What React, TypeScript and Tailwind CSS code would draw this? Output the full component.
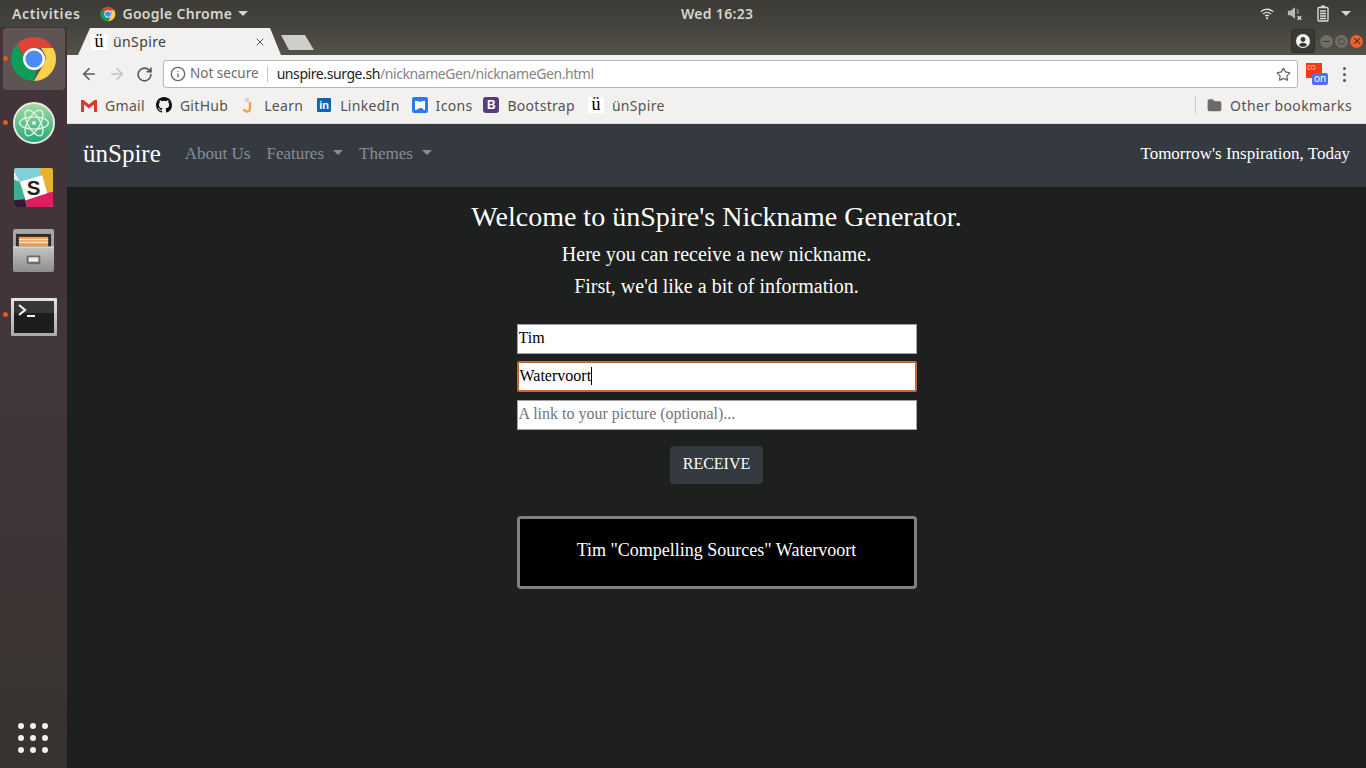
import { ArrowLeft, ArrowRight, RotateCw, Info, Star, X, Minus, Square, Folder } from 'lucide-react';

const uiFont = "font-['Noto_Sans','Open_Sans',sans-serif]";

function ChromeLogo({ size }: { size: number }) {
  return (
    <svg width={size} height={size} viewBox="0 0 48 48">
      <path d="M24 2a22 22 0 0 1 19.05 11H24a11 11 0 0 0-10.4 7.4L6.6 9.6A22 22 0 0 1 24 2z" fill="#db4437" />
      <path d="M43.05 13A22 22 0 0 1 24 46l9.5-16.5A11 11 0 0 0 33.5 16.5L31 13z" fill="#fdd14a" />
      <path d="M6.6 9.6l9.9 17.1a8.8 8.8 0 0 0 8 6.3l2.2-.1L24 46A22 22 0 0 1 6.6 9.6z" fill="#0f9d58" />
      <circle cx="24" cy="24" r="11" fill="#fff" />
      <circle cx="24" cy="24" r="8.6" fill="#4c8bf5" />
    </svg>
  );
}

function AtomLogo() {
  return (
    <svg width="42" height="42" viewBox="0 0 44 44">
      <defs>
        <linearGradient id="atomBg" x1="0" y1="0" x2="0" y2="1">
          <stop offset="0" stopColor="#a9dba6" />
          <stop offset="0.55" stopColor="#5cc08a" />
          <stop offset="1" stopColor="#25a873" />
        </linearGradient>
      </defs>
      <circle cx="22" cy="22" r="21" fill="url(#atomBg)" stroke="#e8ebe6" strokeWidth="2" />
      <g fill="none" stroke="#e4f5e6" strokeWidth="1.4">
        <ellipse cx="22" cy="22" rx="15" ry="6.5" />
        <ellipse cx="22" cy="22" rx="15" ry="6.5" transform="rotate(60 22 22)" />
        <ellipse cx="22" cy="22" rx="15" ry="6.5" transform="rotate(120 22 22)" />
      </g>
      <circle cx="22" cy="22" r="2.2" fill="#e4f5e6" />
    </svg>
  );
}

function SlackLogo() {
  return (
    <svg width="39" height="39" viewBox="0 0 40 40">
      <rect width="40" height="40" rx="3" fill="#e8e8e8" />
      <path d="M0 3a3 3 0 0 1 3-3h24l2 8L6 14z" fill="#7fd0d8" />
      <path d="M27 0h10a3 3 0 0 1 3 3v21l-7 2-6-18z" fill="#e5b32c" />
      <path d="M33 26l7-2v13a3 3 0 0 1-3 3H13l-2-7z" fill="#dc1f5d" />
      <path d="M0 12l6 2 6 19 1 7H3a3 3 0 0 1-3-3z" fill="#3eb08f" />
      <path d="M0 33l11-1 2 8H3a3 3 0 0 1-3-3z" fill="#35173c" />
      <path d="M6.5 14L29 7.5 34 26l-22 7z" fill="#fff" />
      <text x="20" y="28" textAnchor="middle" fontFamily="'Liberation Sans',sans-serif" fontWeight="700" fontSize="21" fill="#222">S</text>
    </svg>
  );
}

function FilesLogo() {
  return (
    <svg width="41" height="43" viewBox="0 0 42 44" className="mt-[-2px]">
      <defs>
        <linearGradient id="filesFront" x1="0" y1="0" x2="0" y2="1">
          <stop offset="0" stopColor="#c4c4c2" />
          <stop offset="1" stopColor="#8e8e8c" />
        </linearGradient>
      </defs>
      <rect x="0" y="0" width="42" height="20" rx="2" fill="#a7a7a5" />
      <rect x="3" y="5" width="36" height="16" fill="#2f2b28" />
      <rect x="6" y="8" width="30" height="10" fill="#ef9a4a" />
      <rect x="6" y="10" width="30" height="1.5" fill="#fbe3c3" />
      <rect x="6" y="13" width="30" height="1.5" fill="#fbe3c3" />
      <path d="M0 18h42v24a2 2 0 0 1-2 2H2a2 2 0 0 1-2-2z" fill="url(#filesFront)" />
      <rect x="0" y="18" width="42" height="1" fill="#e0e0de" />
      <rect x="14" y="27" width="14" height="9" rx="1.5" fill="#6c6c6a" />
      <rect x="16" y="29" width="10" height="4.5" fill="#eee" />
    </svg>
  );
}

function TerminalLogo() {
  return (
    <svg width="46" height="38" viewBox="0 0 46 38" className="mt-[3px]">
      <defs>
        <linearGradient id="termFrame" x1="0" y1="0" x2="0" y2="1">
          <stop offset="0" stopColor="#e4e4e1" />
          <stop offset="1" stopColor="#a9a9a6" />
        </linearGradient>
      </defs>
      <rect width="46" height="38" rx="1" fill="url(#termFrame)" />
      <rect x="3" y="3" width="40" height="32" fill="#1d1d1d" />
      <rect x="3" y="3" width="40" height="12" fill="#363636" />
      <path d="M8 7l6 5-6 5" fill="none" stroke="#eeeeee" strokeWidth="2.2" />
      <rect x="16" y="17" width="8" height="2" fill="#eeeeee" />
    </svg>
  );
}

function Dock() {
  return (
    <div className="w-[67px] shrink-0 flex flex-col bg-gradient-to-b from-[#43343a] via-[#41363a] to-[#37332f]">
      <div className="flex flex-col items-center pt-[1px]">
        <DockSlot active dot><ChromeLogo size={48} /></DockSlot>
        <DockSlot dot><AtomLogo /></DockSlot>
        <DockSlot><SlackLogo /></DockSlot>
        <DockSlot><FilesLogo /></DockSlot>
        <DockSlot dot><TerminalLogo /></DockSlot>
      </div>
      <div className="mt-auto mb-[15px] ml-[18px] grid grid-cols-3 gap-x-[6px] gap-y-[6px] w-[30px]">
        {Array.from({ length: 9 }).map((_, i) => (
          <span key={i} className="w-[6px] h-[6px] rounded-full bg-[#f2f2f0]" />
        ))}
      </div>
    </div>
  );
}

function DockSlot({ children, active, dot }: { children: React.ReactNode; active?: boolean; dot?: boolean }) {
  return (
    <div className={`relative w-[62px] h-[62px] mb-[2px] rounded-[4px] flex items-center justify-center ${active ? 'bg-[#5d5453]' : ''}`}>
      {dot && <span className="absolute left-[0px] top-[28px] w-[5px] h-[5px] rounded-full bg-[#e95420]" />}
      {children}
    </div>
  );
}

function TopBar() {
  return (
    <div className={`h-[27px] shrink-0 flex items-center justify-between bg-gradient-to-b from-[#3c3b37] to-[#45433d] text-[#d6d6d0] text-[14px] font-semibold ${uiFont}`}>
      <div className="flex items-center">
        <span className="ml-[12px] tracking-[0.6px]">Activities</span>
        <span className="ml-[20px]"><ChromeLogo size={16} /></span>
        <span className="ml-[6px] tracking-[0.3px]">Google Chrome</span>
        <span className="ml-[6px] w-0 h-0 border-x-[5px] border-x-transparent border-t-[5px] border-t-[#d6d6d0]" />
      </div>
      <span className="absolute left-[681px] tracking-[0.3px]">Wed 16:23</span>
      <div className="flex items-center pr-[15px]">
        <svg width="14" height="13" viewBox="0 0 16 14" fill="none" stroke="#dcdcd6" strokeWidth="1.6">
          <path d="M1 5a10 10 0 0 1 14 0" />
          <path d="M3.5 7.5a6.5 6.5 0 0 1 9 0" />
          <path d="M5.8 10a3 3 0 0 1 4.4 0" />
          <circle cx="8" cy="12.3" r="1.2" fill="#dcdcd6" stroke="none" />
        </svg>
        <svg className="ml-[13px]" width="16" height="15" viewBox="0 0 18 16">
          <path d="M1 5h3l5-4v13l-5-4H1z" fill="#b9b9b3" />
          <path d="M11 3a6 6 0 0 1 2 4M11 6a3 3 0 0 1 .6 2" fill="none" stroke="#8b8b85" strokeWidth="1.3" />
          <path d="M12 11l4 4M16 11l-4 4" stroke="#dcdcd6" strokeWidth="1.6" />
        </svg>
        <svg className="ml-[14px]" width="12" height="17" viewBox="0 0 12 17" fill="none">
          <rect x="1" y="2.5" width="10" height="13.5" rx="1" stroke="#dcdcd6" strokeWidth="1.4" />
          <rect x="4" y="0.5" width="4" height="2" fill="#dcdcd6" />
          <path d="M3 6h6M3 8.5h6M3 11h6M3 13.5h6" stroke="#dcdcd6" strokeWidth="1.3" />
        </svg>
        <span className="ml-[12px] w-0 h-0 border-x-[5px] border-x-transparent border-t-[5px] border-t-[#d6d6d0]" />
      </div>
    </div>
  );
}

function TabStrip() {
  return (
    <div className="h-[28px] shrink-0 flex items-end bg-gradient-to-b from-[#45433d] to-[#54534a] relative">
      <div className={`ml-[11px] w-[203px] h-[27px] bg-[#f2f1f0] [clip-path:polygon(0_100%,12px_0,192px_0,100%_100%)] flex items-center pl-[13px] text-[14px] text-[#3c3c3c] ${uiFont}`}>
        <span className="w-4 h-4 bg-white text-center text-[18px] leading-[15px] text-black font-['Liberation_Serif',serif]">ü</span>
        <span className="ml-[6px] tracking-[0.4px] mb-[1px]">ünSpire</span>
        <X className="ml-auto mr-[15px] text-[#555]" size={12} strokeWidth={2} />
      </div>
      <div className="mb-[5px] w-[33px] h-[15px] bg-[#cfcec9] [clip-path:polygon(0_0,24px_0,100%_100%,8px_100%)]" />
      <div className="ml-auto mr-[3px] flex items-center mb-[2px]">
        <div className="w-[24px] h-[24px] rounded-[3px] bg-[#3a3a34] border border-[#2e2e2a] flex items-center justify-center">
          <svg width="14" height="14" viewBox="0 0 14 14">
            <circle cx="7" cy="7" r="7" fill="#f4f4f2" />
            <circle cx="7" cy="5.5" r="2.4" fill="#3a3a34" />
            <path d="M2.8 11a5 5 0 0 1 8.4 0 5.5 5.5 0 0 1-8.4 0z" fill="#3a3a34" />
          </svg>
        </div>
        <div className="ml-[5px] flex gap-[2px]">
          <span className="w-[13px] h-[13px] rounded-full bg-[#6f6e67] flex items-center justify-center"><Minus size={9} strokeWidth={2.5} className="text-[#33332f]" /></span>
          <span className="w-[13px] h-[13px] rounded-full bg-[#6f6e67] flex items-center justify-center"><Square size={7} strokeWidth={2} className="text-[#33332f]" /></span>
          <span className="w-[13px] h-[13px] rounded-full bg-[#e9622f] flex items-center justify-center"><X size={10} strokeWidth={2.5} className="text-[#4a2412]" /></span>
        </div>
      </div>
    </div>
  );
}

function Toolbar() {
  return (
    <div className={`h-[37px] shrink-0 pt-[1px] bg-[#f2f1f0] flex items-center text-[14px] ${uiFont}`}>
      <ArrowLeft className="ml-[13px] text-[#5a5a5a]" size={18} strokeWidth={2.2} />
      <ArrowRight className="ml-[10px] text-[#c4c4c4]" size={18} strokeWidth={2.2} />
      <RotateCw className="ml-[10px] text-[#5a5a5a]" size={17} strokeWidth={2.4} />
      <div className="ml-[10px] w-[1135px] h-[28px] bg-white border border-[#b5b5b5] rounded-[3px] flex items-center">
        <Info className="ml-[6px] text-[#666]" size={16} strokeWidth={2} />
        <span className="ml-[4px] mb-[2px] text-[#6b6b6b] text-[13.5px]">Not secure</span>
        <span className="ml-[8px] w-px h-[16px] bg-[#c8c8c8]" />
        <span className="ml-[9px] mb-[2px] text-[14px] tracking-[-0.42px] text-[#222]">unspire.surge.sh<span className="text-[#858585]">/nicknameGen/nicknameGen.html</span></span>
        <Star className="ml-auto mr-[6px] text-[#666]" size={15} strokeWidth={2} />
      </div>
      <div className="ml-[8px] relative w-[23px] h-[23px]">
        <div className="w-[16px] h-[15px] bg-[#f03a10] text-[8px] leading-[7px] text-[#ffc9a8] pl-[1px]">co</div>
        <div className="absolute left-[6px] top-[10px] w-[16px] h-[12px] rounded-[2px] bg-[#4f6ff0] text-[10px] leading-[11px] text-white text-center">on</div>
      </div>
      <div className="ml-[14px] flex flex-col gap-[3px]">
        <span className="w-[3px] h-[3px] rounded-full bg-[#555]" />
        <span className="w-[3px] h-[3px] rounded-full bg-[#555]" />
        <span className="w-[3px] h-[3px] rounded-full bg-[#555]" />
      </div>
    </div>
  );
}

function Bookmark({ icon, label, className }: { icon: React.ReactNode; label: string; className: string }) {
  return (
    <div className={`flex items-center ${className}`}>
      <span className="w-4 h-4 flex items-center justify-center">{icon}</span>
      <span className="ml-[8px] tracking-[0.3px]">{label}</span>
    </div>
  );
}

function BookmarksBar() {
  return (
    <div className={`h-[32px] shrink-0 pb-[5px] bg-[#f2f1f0] flex items-center text-[14px] text-[#555350] border-b border-[#d8d8d6] ${uiFont}`}>
      <Bookmark className="ml-[14px]" label="Gmail" icon={
        <svg width="16" height="13" viewBox="0 0 16 13">
          <path d="M0 1h2.6L8 5.6 13.4 1H16v12h-3V5.5L8 9.5l-5-4V13H0z" fill="#d93a2b" />
        </svg>} />
      <Bookmark className="ml-[11px]" label="GitHub" icon={
        <svg width="16" height="16" viewBox="0 0 16 16">
          <path fill="#111" d="M8 0C3.58 0 0 3.58 0 8c0 3.54 2.29 6.53 5.47 7.59.4.07.55-.17.55-.38v-1.49c-2.01.37-2.53-.49-2.69-.94-.09-.23-.48-.94-.82-1.13-.28-.15-.68-.52-.01-.53.63-.01 1.08.58 1.23.82.72 1.21 1.87.87 2.33.66.07-.52.28-.87.51-1.07-1.78-.2-3.64-.89-3.64-3.95 0-.87.31-1.59.82-2.15-.08-.2-.36-1.02.08-2.12 0 0 .67-.21 2.2.82a7.5 7.5 0 0 1 4 0c1.53-1.04 2.2-.82 2.2-.82.44 1.1.16 1.92.08 2.12.51.56.82 1.27.82 2.15 0 3.07-1.87 3.75-3.65 3.95.29.25.54.73.54 1.48v2.2c0 .21.15.46.55.38A8.01 8.01 0 0 0 16 8c0-4.42-3.58-8-8-8z" />
        </svg>} />
      <Bookmark className="ml-[12px]" label="Learn" icon={
        <svg width="12" height="16" viewBox="0 0 12 16">
          <circle cx="5" cy="3" r="2.4" fill="#d8d8d0" />
          <path d="M8 5v6a3 3 0 0 1-6 1" fill="none" stroke="#f2a33a" strokeWidth="2.4" />
        </svg>} />
      <Bookmark className="ml-[13px]" label="LinkedIn" icon={
        <span className="w-[14px] h-[14px] bg-[#0a66b0] rounded-[1px] text-white text-[11px] leading-[14px] font-bold text-center font-['Liberation_Sans',sans-serif]">in</span>} />
      <Bookmark className="ml-[12px]" label="Icons" icon={
        <span className="w-4 h-4 bg-[#2a7bef] rounded-[2px] flex items-center justify-center">
          <svg width="10" height="9" viewBox="0 0 10 9"><path d="M0 0h3l2 1 2-1h3v9H9L7 7H5L3 8 1 9H0z" fill="#fff" /></svg>
        </span>} />
      <Bookmark className="ml-[11px]" label="Bootstrap" icon={
        <span className="w-4 h-4 bg-[#563d7c] rounded-[3px] text-white text-[12px] leading-[16px] font-bold text-center font-['Liberation_Sans',sans-serif]">B</span>} />
      <Bookmark className="ml-[13px]" label="ünSpire" icon={
        <span className="w-4 h-4 bg-white text-black text-[18px] leading-[15px] text-center font-['Liberation_Serif',serif]">ü</span>} />
      <div className="ml-auto flex items-center pr-[14px]">
        <span className="w-px h-[18px] bg-[#cfcfcc] mr-[11px]" />
        <Folder size={15} className="text-[#6a6a6a] fill-[#6a6a6a]" />
        <span className="ml-[8px] tracking-[0.4px]">Other bookmarks</span>
      </div>
    </div>
  );
}

function NavCaret() {
  return <span className="ml-[9px] mt-[-2px] w-0 h-0 border-x-[5px] border-x-transparent border-t-[5px] border-t-[#868e96]" />;
}

function Navbar() {
  return (
    <div className="h-[63px] shrink-0 bg-[#343a40] flex items-center px-4 pb-[4px] text-[17px]">
      <span className="text-[25px] text-white">ünSpire</span>
      <span className="ml-[24px] text-[#868e96]">About Us</span>
      <span className="ml-[16px] text-[#868e96] flex items-center">Features<NavCaret /></span>
      <span className="ml-[16px] text-[#868e96] flex items-center">Themes<NavCaret /></span>
      <span className="ml-auto text-white">Tomorrow's Inspiration, Today</span>
    </div>
  );
}

function NicknameForm() {
  const fieldClass = 'w-[400px] h-[30px] px-[1px] pb-[2px] bg-white text-black text-[16px] border border-[#a0a0a0] outline-none';
  return (
    <div className="flex flex-col items-center flex-1 bg-[#1e2020] text-white">
      <h1 className="mt-[13px] text-[28px] leading-[34px]">Welcome to ünSpire's Nickname Generator.</h1>
      <p className="mt-[8px] text-[20px] leading-[24px]">Here you can receive a new nickname.</p>
      <p className="mt-[8px] text-[20px] leading-[24px]">First, we'd like a bit of information.</p>
      <input readOnly value="Tim" className={`mt-[26px] ${fieldClass}`} />
      <div className="mt-[7px] w-[400px] h-[31px] pl-[1px] pb-[2px] bg-white text-black text-[16px] border-2 border-[#c4663a] rounded-[2px] flex items-center">
        <span>Watervoort</span>
        <span className="w-px h-[18px] bg-black" />
      </div>
      <input readOnly placeholder="A link to your picture (optional)..." className={`mt-[8px] ${fieldClass} placeholder:text-[#757575]`} />
      <button className="mt-[16px] w-[93px] h-[38px] pb-[2px] rounded-[4px] bg-[#343a40] text-[16px] text-white">RECEIVE</button>
      <div className="mt-[32px] w-[400px] h-[73px] pb-[5px] rounded-[4px] border-[3px] border-[#808080] bg-black flex items-center justify-center text-[18px]">
        Tim "Compelling Sources" Watervoort
      </div>
    </div>
  );
}

export default function App() {
  return (
    <div className="relative w-[1366px] h-[768px] overflow-hidden flex flex-col font-['Liberation_Serif',serif]">
      <TopBar />
      <div className="flex flex-1 min-h-0">
        <Dock />
        <div className="flex-1 flex flex-col min-w-0">
          <TabStrip />
          <Toolbar />
          <BookmarksBar />
          <Navbar />
          <NicknameForm />
        </div>
      </div>
    </div>
  );
}
